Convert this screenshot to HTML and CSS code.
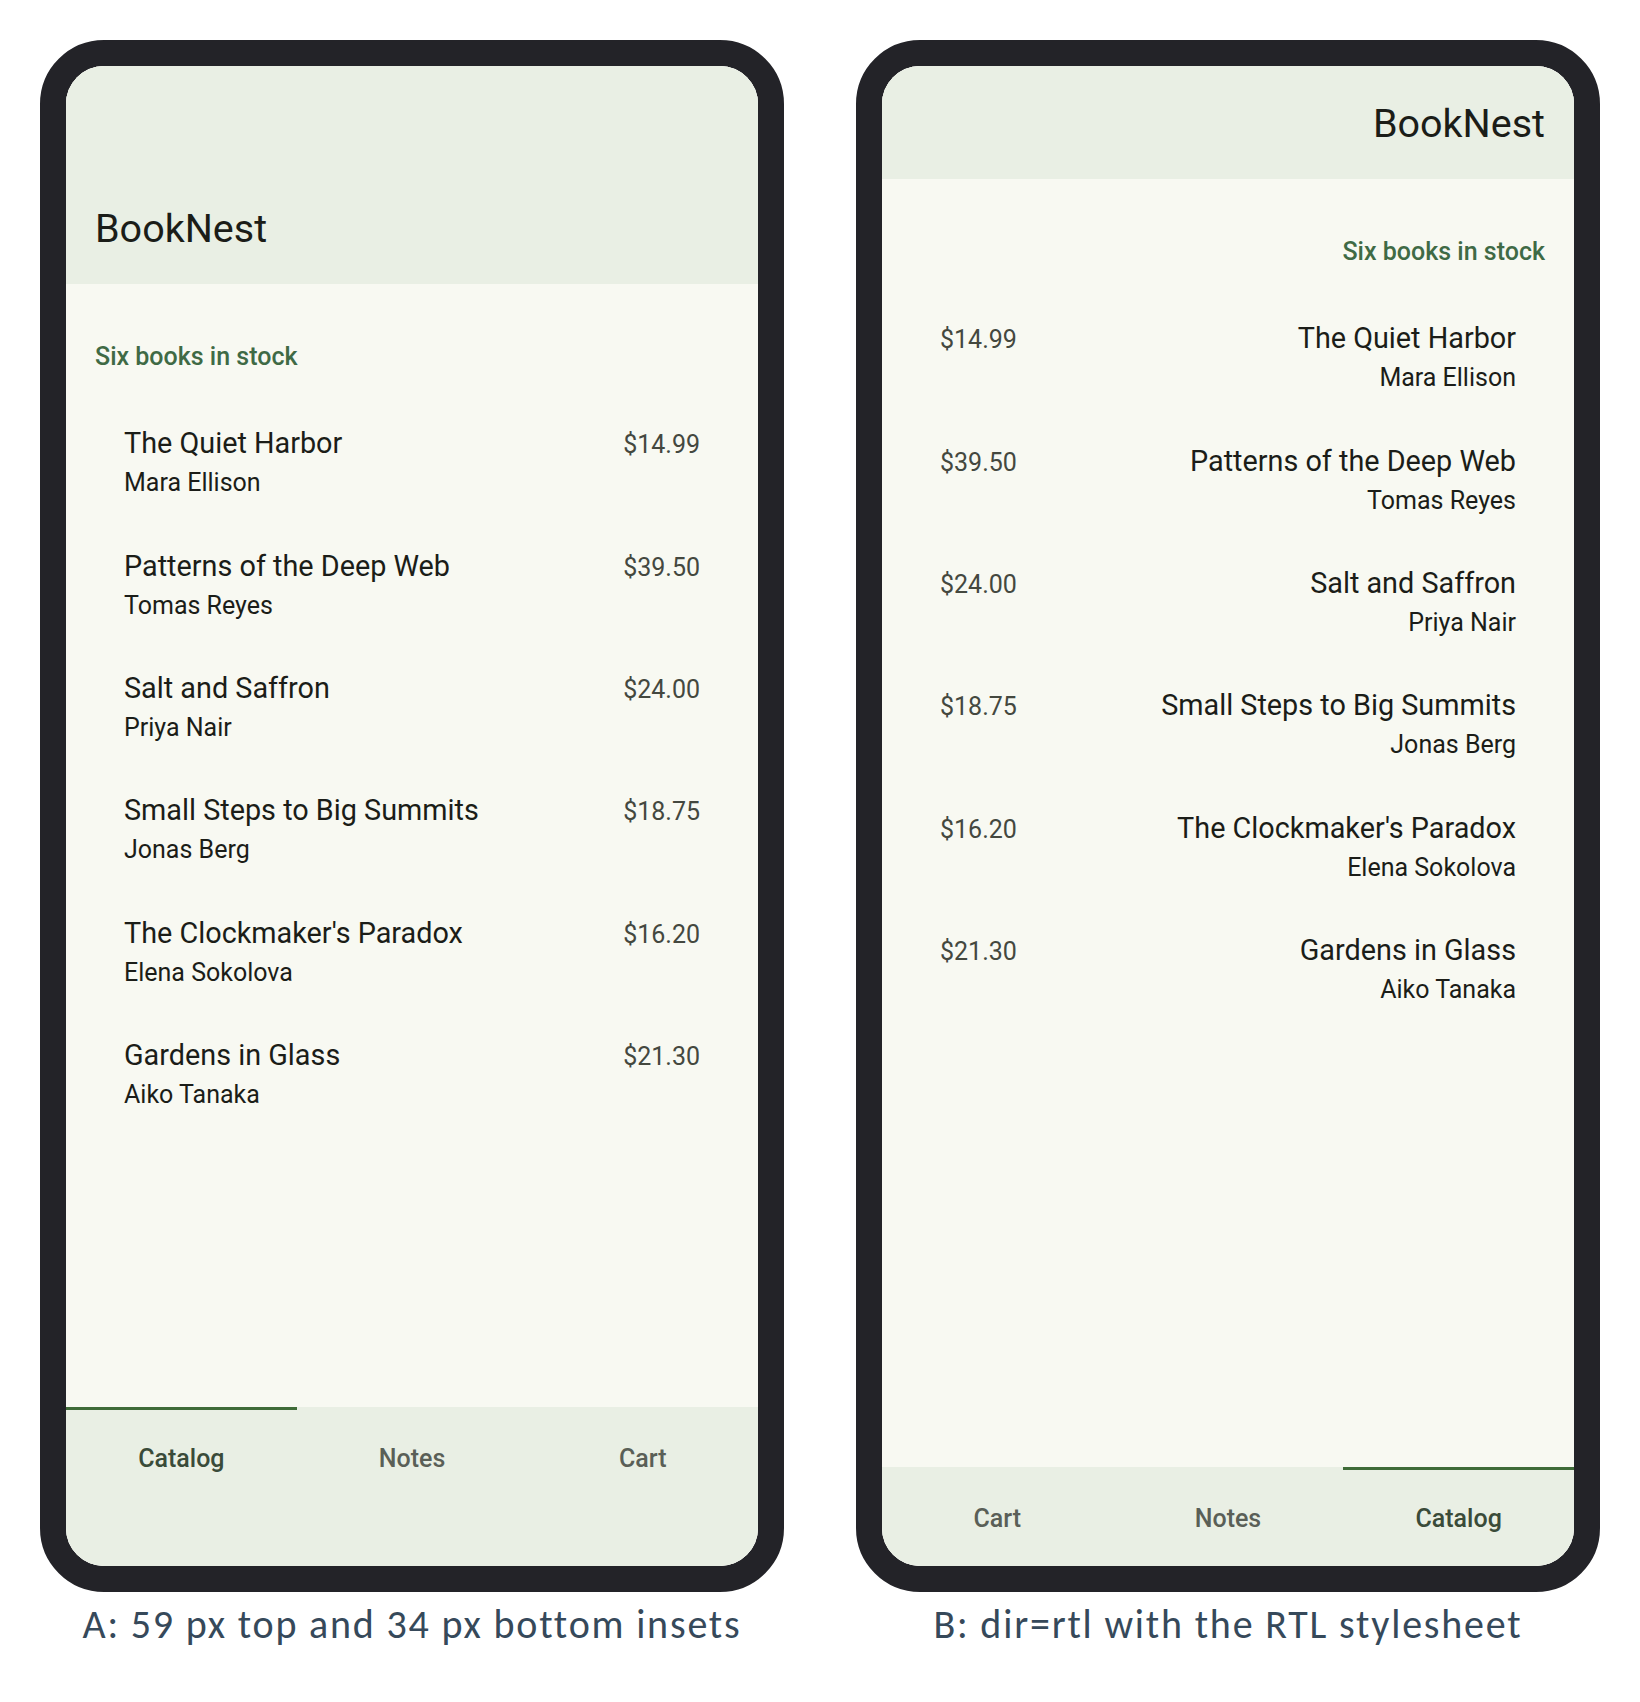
FILE: index.html
```html
<!DOCTYPE html>
<html lang="en">
<head>
<meta charset="utf-8">
<title>BookNest insets and RTL</title>
<link rel="stylesheet" href="styles.css">
</head>
<body>
<div class="stage">
  <figure class="col">
    <div class="phone">
      <div class="screen insets">
        <header class="appbar"><h1 class="app-title">BookNest</h1></header>
        <main class="content">
          <p class="section-label">Six books in stock</p>
          <ul class="book-list">
            <li class="book"><div class="book-text"><span class="book-title">The Quiet Harbor</span><span class="book-author">Mara Ellison</span></div><span class="book-price">$14.99</span></li>
            <li class="book"><div class="book-text"><span class="book-title">Patterns of the Deep Web</span><span class="book-author">Tomas Reyes</span></div><span class="book-price">$39.50</span></li>
            <li class="book"><div class="book-text"><span class="book-title">Salt and Saffron</span><span class="book-author">Priya Nair</span></div><span class="book-price">$24.00</span></li>
            <li class="book"><div class="book-text"><span class="book-title">Small Steps to Big Summits</span><span class="book-author">Jonas Berg</span></div><span class="book-price">$18.75</span></li>
            <li class="book"><div class="book-text"><span class="book-title">The Clockmaker's Paradox</span><span class="book-author">Elena Sokolova</span></div><span class="book-price">$16.20</span></li>
            <li class="book"><div class="book-text"><span class="book-title">Gardens in Glass</span><span class="book-author">Aiko Tanaka</span></div><span class="book-price">$21.30</span></li>
          </ul>
        </main>
        <nav class="tabs">
          <span class="tab active">Catalog</span>
          <span class="tab">Notes</span>
          <span class="tab">Cart</span>
        </nav>
      </div>
    </div>
    <figcaption class="caption">A: 59 px top and 34 px bottom insets</figcaption>
  </figure>

  <figure class="col">
    <div class="phone">
      <div class="screen" dir="rtl">
        <header class="appbar"><h1 class="app-title">BookNest</h1></header>
        <main class="content">
          <p class="section-label">Six books in stock</p>
          <ul class="book-list">
            <li class="book"><div class="book-text"><span class="book-title">The Quiet Harbor</span><span class="book-author">Mara Ellison</span></div><span class="book-price">$14.99</span></li>
            <li class="book"><div class="book-text"><span class="book-title">Patterns of the Deep Web</span><span class="book-author">Tomas Reyes</span></div><span class="book-price">$39.50</span></li>
            <li class="book"><div class="book-text"><span class="book-title">Salt and Saffron</span><span class="book-author">Priya Nair</span></div><span class="book-price">$24.00</span></li>
            <li class="book"><div class="book-text"><span class="book-title">Small Steps to Big Summits</span><span class="book-author">Jonas Berg</span></div><span class="book-price">$18.75</span></li>
            <li class="book"><div class="book-text"><span class="book-title">The Clockmaker's Paradox</span><span class="book-author">Elena Sokolova</span></div><span class="book-price">$16.20</span></li>
            <li class="book"><div class="book-text"><span class="book-title">Gardens in Glass</span><span class="book-author">Aiko Tanaka</span></div><span class="book-price">$21.30</span></li>
          </ul>
        </main>
        <nav class="tabs">
          <span class="tab active">Catalog</span>
          <span class="tab">Notes</span>
          <span class="tab">Cart</span>
        </nav>
      </div>
    </div>
    <figcaption class="caption">B: dir=rtl with the RTL stylesheet</figcaption>
  </figure>
</div>
</body>
</html>
```

FILE: styles.css
```css
* { box-sizing: border-box; }

html, body {
  margin: 0;
  padding: 0;
  background: #ffffff;
}

body {
  width: 1640px;
  height: 1702px;
  font-family: Roboto, "Noto Sans", sans-serif;
}

.stage {
  display: flex;
  gap: 72px;
  padding: 40px 40px 0;
}

.col {
  margin: 0;
  width: 744px;
  display: flex;
  flex-direction: column;
  align-items: center;
}

.phone {
  width: 744px;
  height: 1552px;
  border: 26px solid #232328;
  border-radius: 64px;
  overflow: hidden;
  background: #232328;
}

.screen {
  height: 100%;
  display: flex;
  flex-direction: column;
  background: #f8f9f2;
}

.appbar {
  background: #e9efe4;
  height: 113px;
  padding: 3px 29px 0;
  display: flex;
  align-items: center;
  flex: none;
}

.insets .appbar {
  height: 218px;
  padding-top: 108px;
}

.app-title {
  margin: 0;
  font-size: 39.5px;
  font-weight: 400;
  line-height: 48px;
  color: #1b1d18;
}

.content {
  flex: 1;
  padding: 0 29px;
}

.section-label {
  margin: 55px 0 0;
  font-size: 25px;
  line-height: 36px;
  font-weight: 500;
  color: #3f6a45;
}

.book-list {
  list-style: none;
  margin: 27px 0 0;
  padding: 0;
}

.book {
  display: flex;
  align-items: baseline;
  justify-content: space-between;
  padding: 21.2px 29px;
}

.book-text {
  display: flex;
  flex-direction: column;
}

.book-title {
  font-size: 28.8px;
  line-height: 40px;
  font-weight: 400;
  color: #1b1d18;
}

.book-author {
  font-size: 25px;
  line-height: 40px;
  font-weight: 400;
  color: #1b1d18;
}

.book-price {
  font-size: 25px;
  line-height: 40px;
  font-weight: 400;
  color: #44483f;
}

.tabs {
  flex: none;
  display: flex;
  height: 99px;
  background: #e9efe4;
}

.insets .tabs {
  height: 159px;
}

.tab {
  flex: 1;
  height: 99px;
  border-top: 3px solid transparent;
  padding-top: 1px;
  text-align: center;
  font-size: 25px;
  line-height: 96px;
  font-weight: 500;
  color: #5a5f57;
}

.tab.active {
  border-top-color: #3f6b38;
  color: #3a4b39;
}

.caption {
  margin-top: 8px;
  font-family: Carlito, Lato, "Open Sans", sans-serif;
  font-size: 40px;
  letter-spacing: 1.8px;
  line-height: 50px;
  color: #36495a;
  white-space: nowrap;
}
```
